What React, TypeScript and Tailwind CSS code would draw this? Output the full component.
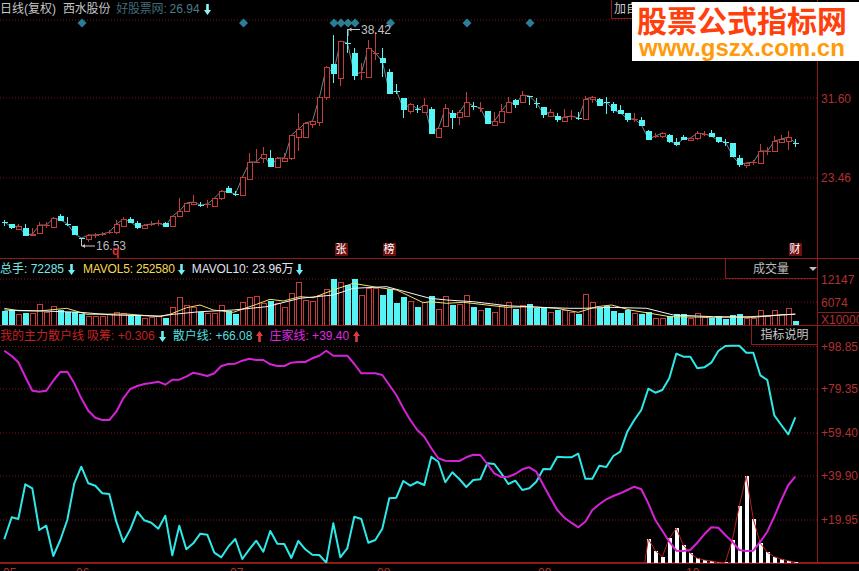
import React from "react";

const FONT = { fontFamily: '"Liberation Sans","Noto Sans CJK SC",sans-serif' };

// [type, wickTop, bodyTop, bodyBottom, wickBottom]  r = red hollow, c = cyan filled
const CANDLES: [string, number, number, number, number][] = [
  ["c",220,222,222,226],["c",224,224,227,229],["r",224,226,229,230],["c",224,228,235,236],["r",228,234,235,236],
  ["r",222,225,233,234],["r",222,225,225,228],["r",217,218,227,227],["c",214,216,220,221],["c",217,224,224,226],
  ["c",226,226,234,235],["c",238,238,238,246],["r",234,235,239,242],["r",233,235,235,238],["r",232,234,234,236],
  ["r",230,232,232,234],["r",220,224,232,234],["r",217,219,226,227],["c",217,219,222,223],["c",221,223,227,229],
  ["r",224,225,228,228],["r",221,224,224,226],["r",220,223,223,226],["c",222,223,226,226],["r",216,216,226,226],
  ["r",198,211,216,216],["r",203,203,211,211],["r",195,202,204,204],["c",202,205,205,207],["r",200,204,204,208],
  ["r",198,198,206,207],["r",190,191,198,200],["c",186,188,192,193],["c",191,194,194,196],["r",177,177,195,196],
  ["r",153,162,179,179],["r",149,162,162,163],["r",147,154,158,163],["c",150,158,166,167],["r",157,158,167,167],
  ["r",153,158,161,161],["r",135,135,158,160],["r",113,129,137,151],["r",122,123,137,137],["r",120,121,124,128],
  ["r",97,97,122,126],["r",66,67,97,100],["c",35,64,73,83],["r",41,41,78,86],["c",29,43,43,53],
  ["c",48,53,75,80],["r",63,72,72,80],["r",40,48,77,77],["r",32,53,53,60],["c",48,58,62,77],
  ["c",69,72,93,94],["c",84,91,91,94],["c",98,98,109,118],["r",103,104,111,114],["c",105,109,109,113],
  ["r",98,105,112,113],["c",107,109,133,134],["r",128,128,137,137],["r",104,108,126,126],["c",110,113,117,129],
  ["r",110,112,117,125],["r",92,102,116,116],["c",102,106,106,110],["r",102,108,108,112],["c",111,111,123,124],
  ["r",112,121,125,125],["r",104,111,122,122],["r",97,102,112,112],["c",99,100,104,108],["r",91,95,102,103],
  ["c",96,96,96,105],["c",98,103,103,108],["c",107,107,114,118],["r",109,112,116,116],["c",113,116,119,122],
  ["r",109,117,121,121],["r",110,116,116,120],["c",112,118,118,120],["r",96,99,119,119],["r",96,97,99,103],
  ["c",98,99,105,105],["c",97,102,102,114],["c",102,104,110,113],["c",105,110,113,114],["c",113,113,119,122],
  ["r",113,119,119,122],["c",117,120,125,126],["c",130,131,139,139],["r",133,136,136,138],["r",132,133,136,138],
  ["c",134,135,141,143],["c",138,142,144,146],["c",135,137,139,140],["r",138,138,140,140],["r",131,133,138,140],
  ["r",131,134,134,136],["c",130,133,136,137],["c",137,137,141,143],["c",139,142,142,146],["c",143,143,156,157],
  ["c",155,158,164,167],["r",163,163,165,168],["r",160,162,162,165],["r",144,151,163,163],["r",147,151,151,155],
  ["r",136,141,151,152],["r",135,139,142,143],["r",131,137,141,150],["c",139,143,143,147],
];

// volume bar tops, in 3x crop units (y = 255 + v / 3)
const VOL: [string, number][] = [
  ["c",168],["c",165],["r",177],["c",173],["r",173],["r",148],["r",170],["r",152],["c",165],["c",170],
  ["c",170],["c",177],["r",183],["r",183],["r",182],["r",178],["r",170],["r",173],["c",180],["c",180],
  ["r",188],["r",185],["r",183],["c",188],["r",157],["r",127],["r",150],["r",155],["c",170],["r",175],
  ["r",173],["r",150],["c",168],["c",177],["r",140],["r",127],["r",124],["r",145],["c",137],["r",145],
  ["r",157],["r",115],["r",82],["r",135],["r",138],["r",120],["r",103],["c",72],["r",82],["c",90],
  ["c",72],["r",120],["r",98],["r",98],["c",120],["c",103],["c",143],["c",125],["r",138],["c",155],
  ["r",142],["c",123],["r",163],["r",124],["c",150],["r",147],["r",120],["c",155],["r",165],["c",158],
  ["r",172],["r",150],["r",142],["c",162],["r",150],["c",148],["c",158],["c",158],["r",172],["c",165],
  ["r",165],["r",172],["c",176],["r",117],["r",142],["c",160],["c",152],["c",167],["c",174],["c",166],
  ["r",174],["c",177],["c",172],["r",190],["r",188],["c",183],["c",178],["c",178],["r",190],["r",175],
  ["r",187],["c",188],["c",184],["c",192],["c",181],["c",178],["r",190],["r",190],["r",166],["r",182],
  ["r",165],["r",177],["r",160],["c",198],
];

const MAVOL5 = [13,160,55,167,118,168,200,160,260,178,380,177,480,185,510,178,560,158,600,150,640,165,700,172,770,148,810,133,850,138,900,125,940,128,1000,105,1060,85,1130,97,1190,105,1270,143,1290,140,1340,145,1390,142,1460,150,1520,157,1590,155,1670,160,1735,172,1790,155,1835,150,1890,165,1950,175,2010,185,2140,187,2250,185,2340,180,2386,178];
const MAVOL10 = [13,165,130,168,240,172,340,180,480,183,520,178,600,170,700,165,800,155,900,130,1000,120,1060,100,1160,95,1290,130,1340,135,1420,140,1520,152,1620,157,1710,160,1750,160,1830,157,1940,160,2020,180,2140,185,2260,187,2340,180,2386,177];

// indicator lines, 3x crop units (x = v / 3, y = 340 + v / 3)
const ZHUANG = [13,32,35,48,55,67,76,110,97,152,118,155,139,152,160,122,181,96,202,95,223,130,244,175,265,212,286,233,307,240,328,240,349,215,370,175,391,147,412,138,433,132,454,129,475,125,496,134,517,119,538,119,559,110,580,98,601,103,622,108,643,100,664,78,685,72,706,71,727,62,748,56,769,60,790,60,811,73,832,78,853,78,874,68,895,66,916,66,937,55,958,47,979,32,1000,47,1021,47,1042,47,1063,72,1084,100,1105,100,1126,100,1147,105,1168,135,1189,165,1210,205,1231,240,1252,270,1273,290,1294,325,1315,355,1336,362,1357,363,1378,363,1399,352,1420,344,1441,345,1462,372,1483,400,1504,411,1525,410,1546,402,1567,388,1588,382,1609,395,1630,435,1651,473,1672,510,1693,533,1714,548,1735,562,1756,545,1777,510,1798,493,1819,478,1840,468,1861,460,1882,450,1903,440,1924,448,1945,490,1966,540,1987,572,2008,605,2029,632,2050,633,2071,630,2092,608,2113,583,2134,562,2155,563,2176,585,2197,605,2218,630,2239,633,2260,632,2281,605,2302,575,2323,530,2344,480,2365,435,2386,410];
const SANHU = [13,598,35,532,55,537,76,433,97,445,118,570,139,557,160,648,181,600,202,540,223,430,244,380,265,430,286,437,307,460,328,462,349,545,370,606,391,568,412,515,433,541,454,548,475,566,496,527,517,646,538,557,559,628,580,610,601,581,622,584,643,638,664,652,685,620,706,597,727,657,748,628,769,602,790,635,811,573,832,611,853,612,874,654,895,603,916,628,937,644,958,645,979,668,1000,550,1021,652,1042,625,1063,530,1084,537,1105,608,1126,600,1147,566,1168,475,1189,473,1210,423,1231,437,1252,426,1273,435,1294,350,1315,365,1336,427,1357,397,1378,417,1399,441,1420,420,1441,418,1462,370,1483,372,1504,400,1525,432,1546,422,1567,450,1588,445,1609,425,1630,387,1651,388,1672,350,1693,352,1714,352,1735,341,1756,416,1777,416,1798,377,1819,381,1840,348,1861,335,1882,275,1903,240,1924,210,1945,146,1966,158,1987,150,2008,115,2029,41,2050,50,2071,50,2092,85,2113,82,2134,68,2155,33,2176,18,2197,17,2218,17,2239,38,2260,38,2281,106,2302,120,2323,226,2344,255,2365,283,2386,232];
const XICHOU = [1945,597,1966,632,1987,650,2008,595,2029,565,2050,615,2071,640,2092,655,2113,660,2134,663,2155,667,2176,667,2197,600,2218,497,2239,408,2260,537,2281,610,2302,637,2323,650,2344,658,2365,662,2386,667];

const DIAMONDS = [82, 243.5, 334, 341, 348, 355, 390.5, 467, 530];
const MAIN_GRID = [20, 98, 178];
const VOL_GRID = [279, 302];
const IND_GRID = [346.5, 389, 433, 476, 520];

const candleX = (i: number) => 4.5 + 7 * i;
const snap = (v: number) => Math.round(v) + 0.5;

function toPoints(raw: number[], base: number) {
  const out: string[] = [];
  for (let i = 0; i < raw.length; i += 2) {
    out.push(`${(raw[i] / 3).toFixed(1)},${(base + raw[i + 1] / 3).toFixed(1)}`);
  }
  return out.join(" ");
}

function GridLines({ ys }: { ys: number[] }) {
  return (
    <>
      {ys.map((y) => (
        <line key={y} x1={0} x2={817} y1={y} y2={y} stroke="#7c1414" strokeWidth={1} strokeDasharray="1 2" />
      ))}
    </>
  );
}

function Arrow({ color, up }: { color: string; up?: boolean }) {
  return (
    <svg width="7" height="11" viewBox="0 0 7 11" className="shrink-0">
      {up ? (
        <path d="M3.5 0 L7 5 L4.8 5 L4.8 11 L2.2 11 L2.2 5 L0 5 Z" fill={color} />
      ) : (
        <path d="M3.5 11 L7 6 L4.8 6 L4.8 0 L2.2 0 L2.2 6 L0 6 Z" fill={color} />
      )}
    </svg>
  );
}

function PriceChart() {
  const closes = CANDLES.map(([t, , top, bot], i) => `${candleX(i)},${t === "r" ? top : bot}`).join(" ");
  return (
    <svg width="817" height="258" viewBox="0 0 817 258" className="block">
      <GridLines ys={MAIN_GRID} />
      <polyline points={closes} fill="none" stroke="#708484" strokeWidth={1} />
      <g shapeRendering="crispEdges">
        {CANDLES.map(([t, wt, bt, bb, wb], i) => {
          const x = candleX(i);
          const color = t === "r" ? "#c43c3c" : "#55f5f5";
          const flat = bb - bt < 1;
          return (
            <g key={i}>
              <line x1={x} x2={x} y1={wt} y2={wb} stroke={color} />
              {flat ? (
                <line x1={x - 3} x2={x + 3} y1={snap(bt)} y2={snap(bt)} stroke={color} />
              ) : t === "r" ? (
                <rect x={x - 2.5} y={snap(bt)} width={5} height={bb - bt} fill="#000" stroke={color} />
              ) : (
                <rect x={x - 2.5} y={bt} width={5.5} height={bb - bt + 1} fill={color} />
              )}
            </g>
          );
        })}
      </g>
      {DIAMONDS.map((x) => (
        <polygon key={x} points={`${x - 4.5},23 ${x},18.5 ${x + 4.5},23 ${x},27.5`} fill="#2a7f96" />
      ))}
      <path d="M348 36 V29.5 H360" fill="none" stroke="#c8c8c8" />
      <path d="M348.5 29.5 l3 -2 v4 z" fill="#c8c8c8" />
      <path d="M81.5 238 V246 H95" fill="none" stroke="#c8c8c8" />
      <path d="M82 246 l3 -2 v4 z" fill="#c8c8c8" />
    </svg>
  );
}

function VolumeChart() {
  return (
    <svg width="817" height="66" viewBox="0 259 817 66" className="block">
      <GridLines ys={VOL_GRID} />
      <g shapeRendering="crispEdges">
        {VOL.map(([t, v], i) => {
          const x = candleX(i);
          const top = Math.round(255 + v / 3);
          return t === "r" ? (
            <rect key={i} x={x - 2.5} y={top + 0.5} width={5} height={325 - top} fill="#000" stroke="#c43c3c" />
          ) : (
            <rect key={i} x={x - 2.5} y={top} width={5.5} height={325 - top} fill="#55f5f5" />
          );
        })}
      </g>
      <polyline points={toPoints(MAVOL5, 255)} fill="none" stroke="#f2e36a" strokeWidth={1} />
      <polyline points={toPoints(MAVOL10, 255)} fill="none" stroke="#f4f4f4" strokeWidth={1} />
    </svg>
  );
}

function IndicatorChart() {
  return (
    <svg width="817" height="237" viewBox="0 326 817 237" className="block">
      <GridLines ys={IND_GRID} />
      <g shapeRendering="crispEdges">
        {XICHOU.map((v, i) =>
          i % 2 === 0 ? (
            <rect key={i} x={v / 3 - 1.5} y={340 + XICHOU[i + 1] / 3} width={4} height={563 - (340 + XICHOU[i + 1] / 3)} fill="#fff" />
          ) : null
        )}
      </g>
      <polyline points={"644.7,563 " + toPoints(XICHOU, 340)} fill="none" stroke="#b52020" strokeWidth={1} />
      <polyline points={toPoints(SANHU, 340)} fill="none" stroke="#2ee8e8" strokeWidth={2} strokeLinejoin="round" />
      <polyline points={toPoints(ZHUANG, 340)} fill="none" stroke="#d423d4" strokeWidth={2} strokeLinejoin="round" />
    </svg>
  );
}

function AxisLabel({ y, text }: { y: number; text: string }) {
  return (
    <span className="absolute left-[3px] text-[12px] leading-[14px] text-[#b03030] whitespace-nowrap" style={{ top: y - 7 }}>
      {text}
    </span>
  );
}

function Badge({ text, x }: { text: string; x: number }) {
  return (
    <span
      className="absolute top-[243px] flex h-[13px] w-[13px] items-center justify-center bg-[#6e0f0f] text-[11px] leading-none text-white"
      style={{ left: x - 6.5 }}
    >
      {text}
    </span>
  );
}

export default function App() {
  return (
    <div className="relative flex h-[571px] w-[859px] flex-col overflow-hidden bg-black" style={FONT}>
      {/* price panel */}
      <div className="flex h-[259px] border-b border-[#8e1a1a]">
        <div className="relative w-[817px]">
          <PriceChart />
          <div className="absolute left-0 top-[2px] flex items-center text-[12px] leading-[15px]">
            <span className="text-[#c4c4c4]">日线(复权)</span>
            <span className="ml-[7px] text-[#c4c4c4] tracking-[-0.2px]">西水股份</span>
            <span className="ml-[6px] text-[#3f6c78] tracking-[-0.2px]">好股票网:</span>
            <span className="ml-[3px] text-[#4f7b88]">26.94</span>
            <span className="ml-[4px]">
              <Arrow color="#8ff4f8" />
            </span>
          </div>
          <span className="absolute left-[361px] top-[23px] text-[12px] leading-[14px] text-[#c4c4c4]">38.42</span>
          <span className="absolute left-[96px] top-[239px] text-[12px] leading-[14px] text-[#b8b8b8]">16.53</span>
          <span className="absolute left-[112px] top-[244px] text-[12px] font-bold leading-[14px] text-[#d83030]">q</span>
          <Badge text="张" x={341} />
          <Badge text="榜" x={389} />
          <Badge text="财" x={795} />
          <div className="absolute right-0 top-0 flex h-[19px] w-[206px] items-center border-b border-l border-[#8e1a1a] pl-[2px] text-[12px] text-[#c8c8c8]">
            加自
          </div>
        </div>
        <div className="relative flex-1 border-l border-[#8e1a1a]">
          <AxisLabel y={99} text="31.60" />
          <AxisLabel y={178} text="23.46" />
        </div>
      </div>

      {/* volume panel */}
      <div className="flex h-[67px] border-b border-[#8e1a1a]">
        <div className="relative w-[817px]">
          <VolumeChart />
          <div className="absolute left-0 top-[3px] flex items-center text-[12px] leading-[15px]">
            <span className="text-[#78e6e6]">总手: 72285</span>
            <span className="ml-[4px]">
              <Arrow color="#6ff0f4" />
            </span>
            <span className="ml-[8px] text-[#f6d84e] tracking-[-0.2px]">MAVOL5: 252580</span>
            <span className="ml-[3px]">
              <Arrow color="#6ff0f4" />
            </span>
            <span className="ml-[7px] text-[#e0e4f0] tracking-[-0.1px]">MAVOL10: 23.96万</span>
            <span className="ml-[3px]">
              <Arrow color="#6ff0f4" />
            </span>
          </div>
          <div className="absolute right-0 top-0 flex h-[20px] w-[92px] items-center border-b border-l border-[#8e1a1a] bg-black text-[12px] text-[#bdbdbd]">
            <span className="ml-[27px]">成交量</span>
            <span className="ml-[20px] h-0 w-0 border-x-[4px] border-t-[4px] border-x-transparent border-t-[#bdbdbd]" />
          </div>
        </div>
        <div className="relative flex-1 border-l border-[#8e1a1a]">
          <AxisLabel y={21} text="12147" />
          <AxisLabel y={44} text="6074" />
          <AxisLabel y={61} text="X10000" />
          <div className="absolute inset-x-0 top-[53px] h-[14px] border-t border-[#8e1a1a]" />
        </div>
      </div>

      {/* indicator panel */}
      <div className="flex h-[238px] border-b-2 border-[#8e1a1a]">
        <div className="relative w-[817px]">
          <IndicatorChart />
          <div className="absolute left-0 top-[3px] flex items-center text-[12px] leading-[15px]">
            <span className="text-[#c42020]">我的主力散户线</span>
            <span className="ml-[3px] text-[#c42020]">吸筹: +0.306</span>
            <span className="ml-[4px]">
              <Arrow color="#6ff0f4" />
            </span>
            <span className="ml-[7px] text-[#55dede]">散户线: +66.08</span>
            <span className="ml-[4px]">
              <Arrow color="#e03a3a" up />
            </span>
            <span className="ml-[6px] text-[#e028e0]">庄家线: +39.40</span>
            <span className="ml-[4px]">
              <Arrow color="#e03a3a" up />
            </span>
          </div>
          <div className="absolute right-0 top-0 flex h-[19px] w-[66px] items-center justify-center border-b border-l border-[#8e1a1a] bg-black text-[12px] text-[#c8c8c8]">
            指标说明
          </div>
        </div>
        <div className="relative flex-1 border-l border-[#8e1a1a]">
          <AxisLabel y={20.5} text="+98.85" />
          <AxisLabel y={63} text="+79.35" />
          <AxisLabel y={107} text="+59.40" />
          <AxisLabel y={150} text="+39.90" />
          <AxisLabel y={194} text="+19.95" />
        </div>
      </div>

      {/* date axis */}
      <div className="relative flex-1 text-[12px] leading-[14px] text-[#b03030]">
        <span className="absolute left-[3px] top-[2px]">05</span>
        <span className="absolute left-[76px] top-[2px]">06</span>
        <span className="absolute left-[230px] top-[2px]">07</span>
        <span className="absolute left-[377px] top-[2px]">08</span>
        <span className="absolute left-[538px] top-[2px]">09</span>
        <span className="absolute left-[686px] top-[2px]">10</span>
      </div>

      {/* site watermark */}
      <div className="absolute right-0 top-[2px] flex h-[59px] w-[227px] flex-col items-start bg-white pl-[5px] pt-[1px]">
        <span className="text-[30px] font-bold leading-[38px] text-[#ff3f0c]">股票公式指标网</span>
        <span className="ml-[2px] mt-[-3px] text-[24px] font-bold leading-[20px] text-[#ff9a0a]">www.gszx.com.cn</span>
      </div>
    </div>
  );
}
